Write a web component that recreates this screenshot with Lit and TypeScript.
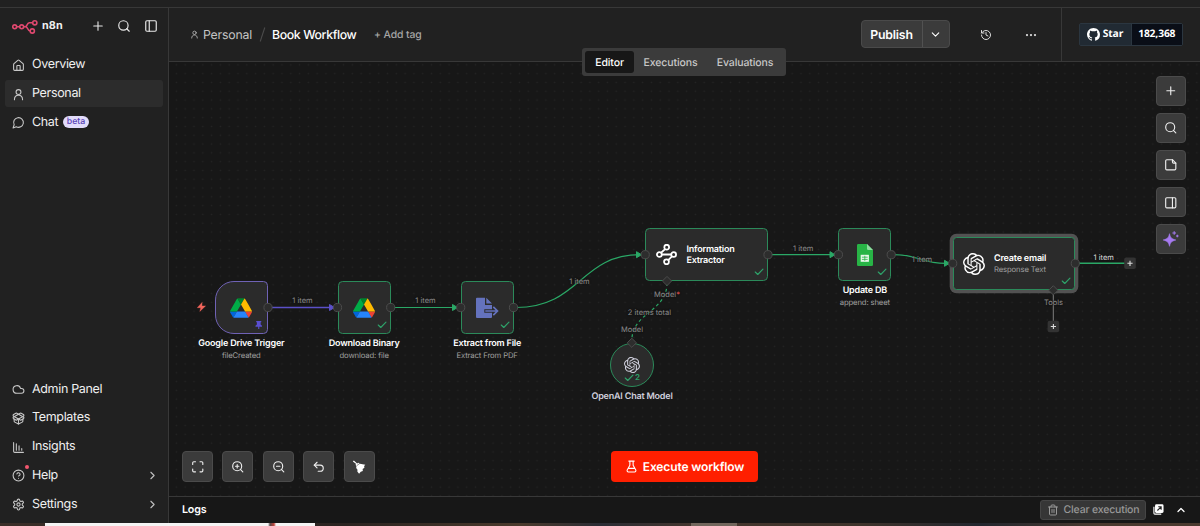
import { LitElement, html, svg, css, nothing, TemplateResult } from "lit";
import { customElement, property } from "lit/decorators.js";
import { classMap } from "lit/directives/class-map.js";
import { styleMap } from "lit/directives/style-map.js";

const OPENAI =
  "M22.2819 9.8211a5.9847 5.9847 0 0 0-.5157-4.9108 6.0462 6.0462 0 0 0-6.5098-2.9A6.0651 6.0651 0 0 0 4.9807 4.1818a5.9847 5.9847 0 0 0-3.9977 2.9 6.0462 6.0462 0 0 0 .7427 7.0966 5.98 5.98 0 0 0 .511 4.9107 6.051 6.051 0 0 0 6.5146 2.9001A5.9847 5.9847 0 0 0 13.2599 24a6.0557 6.0557 0 0 0 5.7718-4.2058 5.9894 5.9894 0 0 0 3.9977-2.9001 6.0557 6.0557 0 0 0-.7475-7.0729zm-9.022 12.6081a4.4755 4.4755 0 0 1-2.8764-1.0408l.1419-.0804 4.7783-2.7582a.7948.7948 0 0 0 .3927-.6813v-6.7369l2.02 1.1686a.071.071 0 0 1 .038.052v5.5826a4.504 4.504 0 0 1-4.4945 4.4944zm-9.6607-4.1254a4.4708 4.4708 0 0 1-.5346-3.0137l.142.0852 4.783 2.7582a.7712.7712 0 0 0 .7806 0l5.8428-3.3685v2.3324a.0804.0804 0 0 1-.0332.0615L9.74 19.9502a4.4992 4.4992 0 0 1-6.1408-1.6464zM2.3408 7.8956a4.485 4.485 0 0 1 2.3655-1.9728V11.6a.7664.7664 0 0 0 .3879.6765l5.8144 3.3543-2.0201 1.1685a.0757.0757 0 0 1-.071 0l-4.8303-2.7865A4.504 4.504 0 0 1 2.3408 7.872zm16.5963 3.8558L13.1038 8.364 15.1192 7.2a.0757.0757 0 0 1 .071 0l4.8303 2.7913a4.4944 4.4944 0 0 1-.6765 8.1042v-5.6772a.79.79 0 0 0-.407-.667zm2.0107-3.0231l-.142-.0852-4.7735-2.7818a.7759.7759 0 0 0-.7854 0L9.409 9.2297V6.8974a.0662.0662 0 0 1 .0284-.0615l4.8303-2.7866a4.4992 4.4992 0 0 1 6.6802 4.66zM8.3065 12.863l-2.02-1.1638a.0804.0804 0 0 1-.038-.0567V6.0742a4.4992 4.4992 0 0 1 7.3757-3.4537l-.142.0805L8.704 5.459a.7948.7948 0 0 0-.3927.6813zm1.0976-2.3654l2.602-1.4998 2.6069 1.4998v2.9994l-2.5974 1.4997-2.6067-1.4997Z";
const GITHUB =
  "M8 0C3.58 0 0 3.58 0 8c0 3.54 2.29 6.53 5.47 7.59.4.07.55-.17.55-.38 0-.19-.01-.82-.01-1.49-2.01.37-2.53-.49-2.69-.94-.09-.23-.48-.94-.82-1.13-.28-.15-.68-.52-.01-.53.63-.01 1.08.58 1.23.82.72 1.21 1.87.87 2.33.66.07-.52.28-.87.51-1.07-1.78-.2-3.64-.89-3.64-3.95 0-.87.31-1.59.82-2.15-.08-.2-.36-1.02.08-2.12 0 0 .67-.21 2.2.82.64-.18 1.32-.27 2-.27.68 0 1.36.09 2 .27 1.53-1.04 2.2-.82 2.2-.82.44 1.1.16 1.92.08 2.12.51.56.82 1.27.82 2.15 0 3.07-1.87 3.75-3.65 3.95.29.25.54.73.54 1.48 0 1.07-.01 1.93-.01 2.2 0 .21.15.46.55.38A8.013 8.013 0 0016 8c0-4.42-3.58-8-8-8z";

/* Stroke icons on a 24 unit grid. */
const ICONS: Record<string, TemplateResult> = {
  plus: svg`<path d="M5 12h14M12 5v14"/>`,
  plusWide: svg`<path d="M3.500 12h17M12 3.500v17"/>`,
  search: svg`<circle cx="11" cy="11" r="8"/><path d="m21 21-4.3-4.3"/>`,
  panelLeft: svg`<rect x="3" y="3" width="18" height="18" rx="2"/><path d="M9 3v18"/>`,
  panelRight: svg`<rect x="3" y="3" width="18" height="18" rx="2"/><path d="M15 3v18"/>`,
  house: svg`<path d="M15 21v-8a1 1 0 0 0-1-1h-4a1 1 0 0 0-1 1v8"/><path d="M3 10a2 2 0 0 1 .709-1.528l7-5.999a2 2 0 0 1 2.582 0l7 5.999A2 2 0 0 1 21 10v9a2 2 0 0 1-2 2H5a2 2 0 0 1-2-2z"/>`,
  user: svg`<circle cx="12" cy="7.5" r="4.5"/><path d="M19.5 21.5c0-5-3-8-7.500-8s-7.500 3-7.500 8"/>`,
  chat: svg`<path d="M7.900 20A9 9 0 1 0 4 16.100L2 22Z"/>`,
  cloud: svg`<path d="M17.500 19H9a7 7 0 1 1 6.710-9h1.790a4.500 4.500 0 1 1 0 9Z"/>`,
  package: svg`<path d="M12 22v-9"/><path d="M15.170 2.210a1.670 1.670 0 0 1 1.630 0L21 4.570a1.930 1.930 0 0 1 0 3.360L8.820 14.790a1.655 1.655 0 0 1-1.640 0L3 12.430a1.930 1.930 0 0 1 0-3.360z"/><path d="M20 13v3.870a2.060 2.060 0 0 1-1.110 1.830l-6 3.080a1.930 1.930 0 0 1-1.780 0l-6-3.080A2.060 2.060 0 0 1 4 16.870V13"/><path d="M21 12.430a1.930 1.930 0 0 0 0-3.360L8.830 2.200a1.640 1.640 0 0 0-1.630 0L3 4.570a1.930 1.930 0 0 0 0 3.360l12.180 6.860a1.636 1.636 0 0 0 1.630 0z"/>`,
  chart: svg`<path d="M3 3v16a2 2 0 0 0 2 2h16M8 17V5M13 17V9M18 17v-3"/>`,
  help: svg`<circle cx="12" cy="12" r="10"/><path d="M9.090 9a3 3 0 0 1 5.830 1c0 2-3 3-3 3M12 17h.01"/>`,
  settings: svg`<path d="M12.220 2h-.440a2 2 0 0 0-2 2v.180a2 2 0 0 1-1 1.730l-.430.250a2 2 0 0 1-2 0l-.150-.080a2 2 0 0 0-2.730.730l-.220.380a2 2 0 0 0 .730 2.730l.150.100a2 2 0 0 1 1 1.720v.510a2 2 0 0 1-1 1.740l-.150.090a2 2 0 0 0-.730 2.730l.220.380a2 2 0 0 0 2.730.730l.150-.080a2 2 0 0 1 2 0l.430.250a2 2 0 0 1 1 1.730V20a2 2 0 0 0 2 2h.440a2 2 0 0 0 2-2v-.180a2 2 0 0 1 1-1.730l.430-.250a2 2 0 0 1 2 0l.150.080a2 2 0 0 0 2.730-.730l.220-.390a2 2 0 0 0-.730-2.730l-.150-.080a2 2 0 0 1-1-1.740v-.500a2 2 0 0 1 1-1.740l.150-.090a2 2 0 0 0 .730-2.730l-.220-.380a2 2 0 0 0-2.730-.730l-.150.080a2 2 0 0 1-2 0l-.430-.250a2 2 0 0 1-1-1.730V4a2 2 0 0 0-2-2z"/><circle cx="12" cy="12" r="3"/>`,
  right: svg`<path d="m9 18 6-6-6-6"/>`,
  down: svg`<path d="m6 9 6 6 6-6"/>`,
  up: svg`<path d="m18 15-6-6-6 6"/>`,
  history: svg`<path d="M3 12a9 9 0 1 0 9-9 9.750 9.750 0 0 0-6.740 2.740L3 8"/><path d="M3 3v5h5M12 7v5l4 2"/>`,
  dots: svg`<circle cx="12" cy="12" r="1"/><circle cx="20" cy="12" r="1"/><circle cx="4" cy="12" r="1"/>`,
  note: svg`<path d="M15 3H5a2 2 0 0 0-2 2v14a2 2 0 0 0 2 2h14a2 2 0 0 0 2-2V9Z"/><path d="M15 3v4a2 2 0 0 0 2 2h4"/>`,
  fit: svg`<path d="M8 3H5a2 2 0 0 0-2 2v3M21 8V5a2 2 0 0 0-2-2h-3M3 16v3a2 2 0 0 0 2 2h3M16 21h3a2 2 0 0 0 2-2v-3"/>`,
  zoomIn: svg`<circle cx="11" cy="11" r="8"/><path d="m21 21-4.350-4.350M11 8v6M8 11h6"/>`,
  zoomOut: svg`<circle cx="11" cy="11" r="8"/><path d="m21 21-4.350-4.350M8 11h6"/>`,
  undo: svg`<path d="M9 14 4 9l5-5"/><path d="M4 9h10.500a5.500 5.500 0 0 1 0 11H11"/>`,
  flask: svg`<path d="M7 2h10M9 2v7.500L4.100 18.500A2.400 2.400 0 0 0 6.200 22h11.600a2.400 2.400 0 0 0 2.100-3.500L15 9.500V2M6.500 15.500h11"/>`,
  trash: svg`<path d="M3 6h18M19 6v14a2 2 0 0 1-2 2H7a2 2 0 0 1-2-2V6M8 6V4a2 2 0 0 1 2-2h4a2 2 0 0 1 2 2v2M10 11v6M14 11v6"/>`,
  check: svg`<path d="M21.500 5 9 18l-6-6"/>`,
};

/* Filled and multi-colour pictures, each with its own view box. */
const ART: Record<string, [string, TemplateResult]> = {
  drive: ["0 0 87.3 78", svg`
    <path fill="#0066da" d="m6.600 66.850 3.850 6.650c.8 1.400 1.950 2.500 3.300 3.300l13.750-23.800h-27.500c0 1.550.4 3.100 1.200 4.500z"/>
    <path fill="#00ac47" d="m43.650 25-13.750-23.800c-1.350.8-2.500 1.900-3.300 3.300l-25.400 44a9.060 9.060 0 0 0-1.200 4.500h27.500z"/>
    <path fill="#ea4335" d="m73.550 76.800c1.350-.8 2.500-1.900 3.300-3.300l1.600-2.750 7.650-13.250c.8-1.400 1.200-2.950 1.200-4.500h-27.502l5.852 11.500z"/>
    <path fill="#00832d" d="m43.650 25 13.750-23.800c-1.350-.8-2.900-1.200-4.500-1.200h-18.500c-1.600 0-3.150.45-4.500 1.200z"/>
    <path fill="#2684fc" d="m59.800 53h-32.300l-13.750 23.800c1.350.8 2.900 1.200 4.500 1.200h50.800c1.600 0 3.150-.45 4.500-1.200z"/>
    <path fill="#ffba00" d="m73.400 26.500-12.700-22c-.8-1.400-1.950-2.500-3.300-3.300l-13.750 23.800 16.150 28h27.450c0-1.550-.4-3.100-1.200-4.500z"/>`],
  file: ["0 0 23 22", svg`
    <path fill="#6472bd" d="M0 1.500A1 1 0 0 1 1 .7H9V8h7v4.200H8.300v3.600H16V20a1 1 0 0 1-1 1H1a1 1 0 0 1-1-1ZM10.300.7 16 6.600h-5.700Z"/>
    <path fill="none" stroke="#6472bd" stroke-width="1.700" d="M9.300 14H21M17.300 9.800l4.200 4.200-4.200 4.200"/>`],
  sheet: ["0 0 16 22", svg`
    <path fill="#28b446" d="M1.300 0H10l6 6v14.700a1.300 1.300 0 0 1-1.300 1.300H1.300A1.300 1.300 0 0 1 0 20.700V1.300A1.300 1.300 0 0 1 1.300 0Z"/>
    <path fill="#8fdc9f" d="M10 0l6 6h-4.700A1.300 1.300 0 0 1 10 4.700Z"/>
    <path fill="#e9f8ec" d="M3.700 10.800h8.200v7h-8.200Z"/>
    <path stroke="#28b446" stroke-width=".8" fill="none" d="M7.800 11.800v5M4.900 13.200h5.800M4.900 15.400h5.800"/>`],
  nodes: ["0 0 20 20", svg`<g fill="none" stroke="#fff" stroke-width="1.700">
    <circle cx="10.200" cy="3" r="2.300"/><circle cx="3.200" cy="10" r="2.300"/><circle cx="16.800" cy="10" r="2.300"/><circle cx="10" cy="17" r="2.300"/>
    <path d="M5.500 10h9M8.700 4.800 4.800 8.300M15.200 11.700l-3.600 3.600"/></g>`],
  openai: ["0 0 24 24", svg`<path fill="currentColor" d=${OPENAI}/>`],
  github: ["0 0 16 16", svg`<path fill="#fff" d=${GITHUB}/>`],
  pin: ["0 0 8 9" , svg`<path fill="#5a4fd0" d="M1.300 0h5.400v1.200H6v2.500L7.500 5v1H4.600v3H3.400V6H.5V5L2 3.700V1.200h-.7Z"/>`],
  broom: ["0 0 15 15", svg`<path fill="#fff" d="M.9 1.700 2 .6l3.500 3.200 1.300-.9 1.700 1L14.300 5.200 13 6.400l.3 2-1.900 1.300.2 2-2.200.8L7.600 14.600 5.700 12.300l.2-1.900-1.400-1.700.2-2.200-1-1.500.8-.7Z"/><path d="M5 6.100 8.500 3.600" stroke="#3b3b3b" stroke-width=".6"/>`],
  sparkle: ["0 0 16 16", svg`
    <path fill="#a67af0" stroke="#a67af0" stroke-width=".6" stroke-linejoin="round" d="M6.500 2.700c.9 4 2 5.100 6.300 6.300-4.300 1.200-5.400 2.300-6.300 6.300C5.600 11.300 4.500 10.200.2 9 4.500 7.800 5.600 6.700 6.500 2.700Z"/>
    <path stroke="#a67af0" stroke-width="1" d="M11.200.2v3.600M9.400 2H13M14.300 3.700v2.600M13 5h2.600"/>`],
  popout: ["0 0 12 12", svg`<path fill="none" stroke="#fff" stroke-width="1.200" d="M1 3v7a1 1 0 0 0 1 1h7"/><rect x="2.200" y=".4" width="9.300" height="9.300" rx="1.500" fill="#fff"/><path fill="none" stroke="#222" stroke-width="1.200" d="M4.800 7.100 8.700 3.200M5.700 3h3.200v3.200"/>`],
  logo: ["0 0 27 15", svg`<g fill="none" stroke="#e0486f" stroke-width="1.600">
    <circle cx="2.700" cy="7.800" r="1.950"/><circle cx="9.700" cy="7.800" r="1.950"/><circle cx="22.800" cy="3.800" r="2.100"/><circle cx="20.300" cy="12" r="2.100"/>
    <path d="M4.700 7.800h3M11.700 7.800h1.400c2.700 0 1.400-4 4.200-4h3.400M13.600 7.700c2.700.2 1.600 4.300 4.600 4.300"/></g>`],
};

function art(name: string, w: number, h = w) {
  const [box, body] = ART[name];
  return html`<svg width=${w} height=${h} viewBox=${box} style="display:block;flex:none" aria-hidden="true">${body}</svg>`;
}
function icon(name: string, size: number, stroke = 2) {
  return html`<svg width=${size} height=${size} viewBox="0 0 24 24" fill="none" stroke="currentColor" stroke-width=${stroke}
    stroke-linecap="round" stroke-linejoin="round" style="display:block;flex:none" aria-hidden="true">${ICONS[name]}</svg>`;
}

interface NavItem { icon: string; label: string; active?: boolean; badge?: string; more?: boolean; dot?: boolean }
const NAV_TOP: NavItem[] = [
  { icon: "house", label: "Overview" },
  { icon: "user", label: "Personal", active: true },
  { icon: "chat", label: "Chat", badge: "beta" },
];
const NAV_BOTTOM: NavItem[] = [
  { icon: "cloud", label: "Admin Panel" },
  { icon: "package", label: "Templates" },
  { icon: "chart", label: "Insights" },
  { icon: "help", label: "Help", more: true, dot: true },
  { icon: "settings", label: "Settings", more: true },
];

@customElement("side-bar")
class SideBar extends LitElement {
  static styles = css`
    :host { display: flex; flex-direction: column; width: 168px; flex: none; border-right: 1px solid #383838; background: #212121; box-sizing: content-box; color: #f0f0f0; }
    .head { display: flex; align-items: center; height: 36px; padding: 0 10px 0 12px; }
    .brand { display: flex; align-items: center; gap: 3px; font: 700 10.800px/14px Inter, sans-serif; letter-spacing: .1px; flex: 1; }
    .tools { display: flex; align-items: center; gap: 13px; color: #e8e8e8; }
    .list { display: flex; flex-direction: column; gap: 2.300px; padding: 0 5px; }
    .top { padding-top: 7.500px; }
    .bottom { margin-top: auto; padding-bottom: 5.500px; }
    .item { display: flex; align-items: center; height: 26.500px; border-radius: 3px; padding: 0 4px 0 7px; gap: 7px; font: 400 12.500px/16px Inter, sans-serif; letter-spacing: -.33px; }
    .item.active { background: #2c2c2c; }
    .ico { position: relative; color: #c8c8c8; padding-top: 1px; }
    .dot { position: absolute; right: -3.500px; top: -3px; width: 4px; height: 4px; border-radius: 50%; background: #f2576e; }
    .label { white-space: nowrap; padding-top: 1px; }
    .more { margin-left: auto; color: #c0c0c0; }
    .badge { font: 500 8.800px/12px Inter, sans-serif; letter-spacing: -.1px; color: #5b45b8; background: #e2dcfb; border-radius: 6px; padding: 0 3.500px; margin-left: -2px; }
  `;
  private item(n: NavItem) {
    return html`<div class=${classMap({ item: true, active: !!n.active })}>
      <span class="ico">${icon(n.icon, 13)}${n.dot ? html`<i class="dot"></i>` : nothing}</span>
      <span class="label">${n.label}</span>
      ${n.badge ? html`<span class="badge">${n.badge}</span>` : nothing}
      ${n.more ? html`<span class="more">${icon("right", 13)}</span>` : nothing}
    </div>`;
  }
  render() {
    return html`
      <div class="head">
        <div class="brand">${art("logo", 27, 15)}<span>n8n</span></div>
        <div class="tools">${icon("plusWide", 12, 2.200)}${icon("search", 14)}${icon("panelLeft", 14)}</div>
      </div>
      <nav class="list top">${NAV_TOP.map((n) => this.item(n))}</nav>
      <nav class="list bottom">${NAV_BOTTOM.map((n) => this.item(n))}</nav>`;
  }
}

@customElement("top-bar")
class TopBar extends LitElement {
  static styles = css`
    :host { display: flex; height: 53px; flex: none; border-bottom: 1px solid #383838; background: #212121; position: relative; font-family: Inter, sans-serif; color: #fff; }
    .crumbs { display: flex; align-items: center; flex: 1; padding-left: 20.500px; font-size: 12.300px; white-space: nowrap; }
    .owner { display: flex; align-items: center; gap: 4.500px; color: #c4c4c4; width: 63px; letter-spacing: -.2px; }
    .slash { color: #4a4a4a; width: 19.500px; display: flex; justify-content: center; }
    .name { font-weight: 500; width: 84.500px; letter-spacing: -.38px; }
    .tag { font-size: 10.400px; font-weight: 500; color: #a6a6a6; margin-left: 17.500px; letter-spacing: -.1px; }
    .actions { display: flex; align-items: center; padding-bottom: 1px; }
    .publish { display: flex; height: 25.500px; border: 1px solid #4a4a4a; border-radius: 4px; background: #3b3b3b; align-items: stretch; overflow: hidden; }
    .publish b { display: flex; align-items: center; justify-content: center; width: 60px; font-size: 12.300px; font-weight: 600; letter-spacing: -.2px; border-right: 1px solid #515151; }
    .publish span { display: flex; align-items: center; justify-content: center; width: 26px; }
    .square { display: flex; justify-content: center; width: 45px; color: #ddd; padding-top: 1px; }
    .history { margin-left: 13.500px; }
    .github { display: flex; align-items: center; justify-content: center; width: 138px; border-left: 1px solid #383838; margin-left: 8px; }
    .badge { display: flex; height: 21px; border: 1px solid #2b3640; border-radius: 2px; font: 700 10.300px/20px "Open Sans", sans-serif; letter-spacing: -.15px; margin: -1px 0 0 -.5px; }
    .star { display: flex; align-items: center; gap: 3px; width: 51px; justify-content: center; background: #212a33; border-right: 1px solid #2b3640; }
    .count { width: 50.500px; text-align: center; background: #0a0e17; }
    .tabs { position: absolute; left: 413px; top: 39.500px; display: grid; grid-template-columns: 48.500px 73.500px 1fr; width: 197.500px; height: 22px; padding: 3.300px; background: #3b3b3b; border-radius: 3px; font-size: 10.500px; font-weight: 500; letter-spacing: -.1px; color: #c8c8c8; z-index: 3; }
    .tab { display: flex; align-items: center; justify-content: center; padding-top: 1px; border-radius: 3px; white-space: nowrap; }
    .tab.on { background: #171717; color: #fff; }
  `;
  render() {
    return html`
      <div class="crumbs">
        <span class="owner">${icon("user", 9)}<span>Personal</span></span>
        <span class="slash"><svg width="7" height="17" viewBox="0 0 7 17"><path d="M5.800 1.500 1.200 15.500" stroke="currentColor" stroke-width="1.100"/></svg></span>
        <span class="name">Book Workflow</span><span class="tag">+ Add tag</span>
      </div>
      <div class="actions">
        <div class="publish"><b>Publish</b><span>${icon("down", 13)}</span></div>
        <span class="square history">${icon("history", 12)}</span>
        <span class="square">${icon("dots", 12, 2.500)}</span>
      </div>
      <div class="github"><div class="badge">
        <span class="star">${art("github", 13)}<span>Star</span></span><span class="count">182,368</span>
      </div></div>
      <div class="tabs">
        ${["Editor", "Executions", "Evaluations"].map((t, i) => html`<span class=${classMap({ tab: true, on: i === 0 })}>${t}</span>`)}
      </div>`;
  }
}

interface FlowNode {
  x: number; y: number; w: number; h: number; kind: string; art: string; size: [number, number];
  title: string; sub?: string; mark: "check" | "pin" | "count";
}
/* Node boxes in window coordinates; the canvas origin is subtracted when placed. */
const OX = 169, OY = 62;
const NODES: FlowNode[] = [
  { x: 214.7, y: 281, w: 53.300, h: 53.300, kind: "trigger", art: "drive", size: [22, 20], title: "Google Drive Trigger", sub: "fileCreated", mark: "pin" },
  { x: 337.5, y: 281, w: 53.300, h: 53.300, kind: "box", art: "drive", size: [22, 20], title: "Download Binary", sub: "download: file", mark: "check" },
  { x: 460.5, y: 281, w: 53.300, h: 53.300, kind: "box", art: "file", size: [23, 22], title: "Extract from File", sub: "Extract From PDF", mark: "check" },
  { x: 645, y: 228.2, w: 123.200, h: 53.300, kind: "wide", art: "nodes", size: [21, 21], title: "Information Extractor", mark: "check" },
  { x: 838.2, y: 228.2, w: 53.300, h: 53.300, kind: "box", art: "sheet", size: [16, 22], title: "Update DB", sub: "append: sheet", mark: "check" },
  { x: 953, y: 236.8, w: 122, h: 53.700, kind: "wide selected", art: "openai", size: [22, 22], title: "Create email", sub: "Response Text", mark: "check" },
  { x: 610, y: 342.6, w: 44, h: 44, kind: "round", art: "openai", size: [16, 16], title: "OpenAI Chat Model", mark: "count" },
];
const LABELS: [number, number, string, string?][] = [
  [302.500, 300, "1 item"], [425.500, 300, "1 item"], [579.500, 281, "1 item"], [803.200, 247.500, "1 item"],
  [922, 259, "1 item"], [1103.700, 256.500, "1 item", "bright"], [649.500, 312, "2 items total"], [632, 328.500, "Model"], [1053.500, 302.300, "Tools"],
];
const HANDLES = [[268, 307.5], [337.5, 307.5], [390.7, 307.5], [460.7, 307.5], [513.5, 307.5], [645.2, 254.7], [768, 254.7], [838.4, 254.7], [891.2, 254.7], [952.7, 263.4], [1075.3, 263.4]];
const DIAMONDS = [[667, 281], [631.8, 342.8], [1053.3, 290.3]];
const ARROWS: [number, number, string][] = [[334.5, 307.5, "#5b50c8"], [457.5, 307.5, "#2aa866"], [641.5, 254.7, "#2aa866"], [835, 254.7, "#2aa866"], [949.5, 263.3, "#2aa866"]];

@customElement("flow-canvas")
class FlowCanvas extends LitElement {
  static styles = css`
    :host { display: block; flex: 1; position: relative; overflow: hidden; background-color: #171717; font-family: Inter, sans-serif; color: #fff;
      background-image: radial-gradient(circle, #242424 0, #242424 .5px, transparent 1.100px); background-size: 8.800px 8.800px; background-position: 3px 7.300px; }
    .layer { position: absolute; inset: 0; }
    .node { position: absolute; box-sizing: border-box; display: flex; align-items: center; justify-content: center; background: #2b2b2b; border: 1px solid #2b8a5a; border-radius: 4.500px; color: #fff; }
    .trigger { border: 1.200px solid #6f62b5; border-radius: 19px 4.500px 4.500px 19px; }
    .wide { justify-content: flex-start; padding-left: 10px; gap: 9.500px; }
    .round { border-radius: 50%; color: #cfcfdc; }
    .selected { box-shadow: 0 0 0 3.300px #525252; border: 1.600px solid #2b8a5a; border-radius: 3.500px; padding-left: 8.500px; }
    .cap { position: absolute; top: calc(100% + 4px); left: 50%; transform: translateX(-50%); text-align: center; white-space: nowrap; }
    .title { font-size: 9px; line-height: 13px; font-weight: 600; letter-spacing: -.2px; }
    .sub { font-size: 7.700px; line-height: 11px; color: #a0a0a0; letter-spacing: -.13px; }
    .in .title { line-height: 11px; width: 60px; }
    .in .sub { line-height: 12px; }
    .selected .in { padding-top: 2px; }
    .mark { position: absolute; right: 3px; bottom: 3px; color: #2ea36a; display: flex; align-items: center; gap: 1.500px; }
    .mark.pin { right: 4.500px; bottom: 4px; }
    .mark.count { right: 13px; bottom: 3px; font-size: 8px; line-height: 9px; font-weight: 600; }
    .tag { position: absolute; transform: translate(-50%, -50%); font-size: 7.500px; line-height: 9px; color: #8c8c8c; white-space: nowrap; text-shadow: 0 0 1px #171717, 0 0 2px #171717; }
    .tag.bright { color: #ddd; }
    .req { color: #e0504f; }
    .stack { position: absolute; right: 14px; top: 14px; display: flex; flex-direction: column; gap: 7.100px; }
    .row { position: absolute; left: 13px; bottom: 14px; display: flex; gap: 9.900px; }
    .btn { box-sizing: border-box; width: 30.600px; height: 30.600px; display: flex; align-items: center; justify-content: center; background: #3b3b3b; border: 1px solid #4b4b4b; border-radius: 4px; color: #eee; }
    .stack .btn { height: 30px; width: 30px; }
    .run { position: absolute; left: 442px; bottom: 14px; width: 147px; height: 31px; display: flex; align-items: center; justify-content: center; gap: 5px; background: #ff1f00; border-radius: 4px; font-size: 12px; font-weight: 600; letter-spacing: -.13px; white-space: nowrap; }
  `;
  private edges() {
    const g = "#2aa866";
    return svg`
      <g fill="none" stroke=${g} stroke-width="1.200">
        <path stroke="#5b50c8" stroke-width="1.500" d="M270 307.500H331"/>
        <path d="M393 307.500H455M516 307.500C580 307.500 580 254.700 640 254.700M770 254.700H832M893 254.700C920 254.700 920 263.300 946 263.300"/>
        <path stroke-width="1.500" d="M1077 263.300H1126"/>
        <path stroke-dasharray="3 2.800" d="M667 283C667 312 631.800 312 631.800 341"/>
        <path stroke="#8a8a8a" stroke-width=".9" d="M1053.300 293V322"/>
      </g>
      ${ARROWS.map(([x, y, c]) => svg`<path fill=${c} stroke=${c} stroke-linejoin="round" stroke-width="1" d="M${x - 5} ${y - 3}v6l5-3z"/>`)}`;
  }
  private ports() {
    return svg`
      <g fill="#2d2d2d" stroke="#4c4c4c" stroke-width="1">
        ${HANDLES.map(([x, y]) => svg`<circle cx=${x} cy=${y} r="4.100"/>`)}
        ${DIAMONDS.map(([x, y]) => svg`<path d="M${x} ${y - 4.6}l4.600 4.600-4.600 4.600-4.600-4.600z"/>`)}
      </g>
      ${[[1130, 263.3], [1053.4, 326.5]].map(([x, y]) => svg`<rect x=${x - 5.8} y=${y - 5.8} width="11.600" height="11.600" rx="2" fill="#333"/>
        <path stroke="#ddd" stroke-width="1.100" d="M${x - 2.6} ${y}h5.200M${x} ${y - 2.6}v5.200"/>`)}`;
  }
  private node(n: FlowNode) {
    const wide = n.kind.startsWith("wide");
    const text = html`<div class="title">${n.title}</div>${n.sub ? html`<div class="sub">${n.sub}</div>` : nothing}`;
    return html`<div class="node ${n.kind}" style=${styleMap({ left: `${n.x - OX}px`, top: `${n.y - OY}px`, width: `${n.w}px`, height: `${n.h}px` })}>
      ${art(n.art, n.size[0], n.size[1])}
      <div class=${wide ? "in" : "cap"}>${text}</div>
      <div class="mark ${n.mark}">${n.mark === "pin" ? art("pin", 7.5, 8.5) : icon("check", 10, 2.700)}${n.mark === "count" ? html`<span>2</span>` : nothing}</div>
    </div>`;
  }
  render() {
    const box = "169 62 1031 434";
    return html`
      <svg class="layer" width="1031" height="434" viewBox=${box}>${this.edges()}</svg>
      ${NODES.map((n) => this.node(n))}
      <svg class="layer" width="1031" height="434" viewBox=${box}>${this.ports()}
        <path transform="translate(196.500 301.800)" fill="#f2655c" stroke="#f2655c" stroke-width=".4" d="M5.600.6.800 5.900H4.300L3.300 9.600 9 4.200H5.400Z"/></svg>
      ${LABELS.map(([x, y, t, c]) => html`<span class="tag ${c ?? ""}" style=${styleMap({ left: `${x - OX}px`, top: `${y - OY}px` })}>${t}</span>`)}
      <span class="tag" style=${styleMap({ left: `${667 - OX}px`, top: `${293.5 - OY}px` })}>Model<span class="req">*</span></span>
      <div class="stack">
        ${["plus", "search", "note", "panelRight"].map((n) => html`<div class="btn">${icon(n, 13.5)}</div>`)}
        <div class="btn">${art("sparkle", 16)}</div>
      </div>
      <div class="row">
        ${["fit", "zoomIn", "zoomOut", "undo"].map((n) => html`<div class="btn">${icon(n, 13.5)}</div>`)}
        <div class="btn">${art("broom", 14)}</div>
      </div>
      <div class="run">${icon("flask", 13)}<span>Execute workflow</span></div>`;
  }
}

@customElement("log-bar")
class LogBar extends LitElement {
  static styles = css`
    :host { display: flex; align-items: center; box-sizing: border-box; height: 27px; flex: none; border-top: 1px solid #383838; background: #171717; padding: 0 13px 1px; font-family: Inter, sans-serif; color: #fff; }
    .title { flex: 1; font-size: 10.700px; font-weight: 600; letter-spacing: -.2px; }
    .clear { display: flex; align-items: center; justify-content: center; gap: 5px; box-sizing: border-box; width: 106px; height: 20px; border: 1px solid #454545; border-radius: 3px; background: #363636; color: #989898; font-size: 10.500px; font-weight: 500; letter-spacing: -.17px; white-space: nowrap; }
    .pop { margin: 0 11px 0 7px; }
  `;
  render() {
    return html`<span class="title">Logs</span>
      <div class="clear">${icon("trash", 12)}<span>Clear execution</span></div>
      <span class="pop">${art("popout", 11)}</span>${icon("up", 12, 2.500)}`;
  }
}

@customElement("app-root")
class AppRoot extends LitElement {
  @property({ type: String }) name = "workflow";
  static styles = css`
    :host { display: flex; flex-direction: column; width: 1200px; height: 526px; overflow: hidden; background: #171717; text-rendering: geometricPrecision; }
    .strip { height: 7px; flex: none; background: #212121; border-bottom: 1px solid #383838; }
    .body { display: flex; height: 515px; flex: none; }
    .main { display: flex; flex-direction: column; flex: 1; min-width: 0; }
    .desk { display: flex; height: 3px; flex: none; background: linear-gradient(90deg, #3a2e28 0, #2a2320 345px, #4a3a2c 520px, #2a2c34 600px, #45362d 700px, #3e332b 860px, #22262e 980px, #4a3a2f 1100px); }
    .desk i { display: block; height: 3px; }
    .white { width: 270px; margin-left: 45px; background: linear-gradient(90deg, #f4f4f4 223px, #5a4a4a 225px, #c0453c 229px, #f4f4f4 231px); }
    .thumb { width: 46px; margin-left: 376px; background: #71665c; }
  `;
  render() {
    return html`
      <div class="strip"></div>
      <div class="body">
        <side-bar></side-bar>
        <div class="main"><top-bar></top-bar><flow-canvas></flow-canvas><log-bar></log-bar></div>
      </div>
      <div class="desk"><i class="white"></i><i class="thumb"></i></div>`;
  }
}
